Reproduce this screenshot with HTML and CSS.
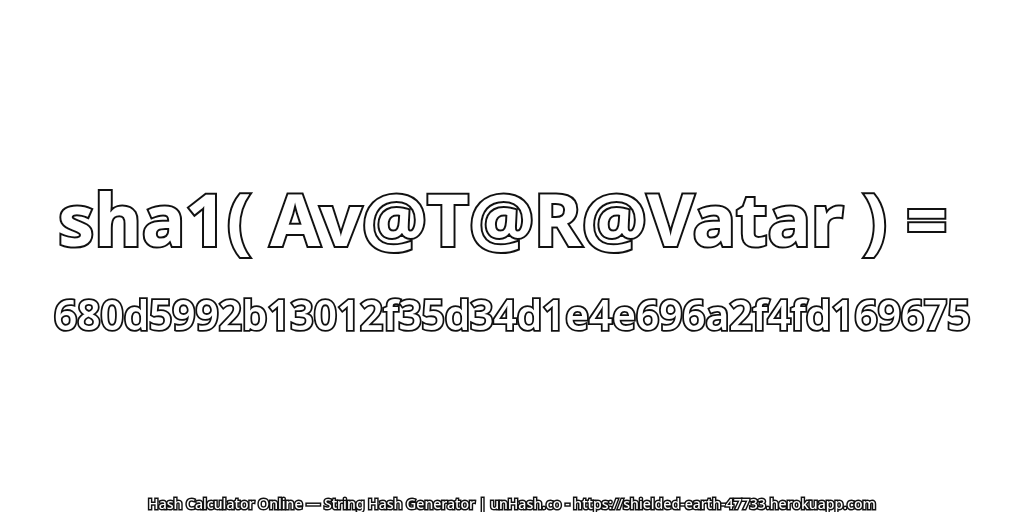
FILE: index.html
```html
<!doctype html>
<html lang="en">
<head>
	<meta charset="UTF-8">
	<title>unHash</title>
	<link rel="stylesheet" href="styles.css">
</head>
<body>
	<main class="card">
		<h1 class="title">sha1( Av@T@R@Vatar ) =</h1>
		<p class="hash">680d5992b13012f35d34d1e4e696a2f4fd169675</p>
	</main>
	<footer class="credit">Hash Calculator Online — String Hash Generator | unHash.co - https://shielded-earth-47733.herokuapp.com</footer>
</body>
</html>
```

FILE: styles.css
```css
html, body {
	margin: 0;
	height: 512px;
	overflow: hidden;
}
body {
	display: flex;
	flex-direction: column;
	background: #fff;
	font-family: "Noto Sans", sans-serif;
	color: #fff;
}
.card {
	flex: 1;
	display: flex;
	flex-direction: column;
	align-items: center;
	padding-top: 178px;
}
.title, .hash, .credit {
	margin: 0;
	white-space: nowrap;
	paint-order: stroke fill;
	will-change: transform;
}
.title {
	font-size: 72.6px;
	font-weight: 700;
	line-height: 80px;
	padding-right: 18px;
	-webkit-text-stroke: 4px #111;
}
.hash {
	font-size: 40.6px;
	font-weight: 600;
	line-height: 50px;
	margin-top: 32px;
	-webkit-text-stroke: 3.6px #111;
}
.credit {
	text-align: center;
	font-size: 14.1px;
	font-weight: 500;
	line-height: 16px;
	-webkit-text-stroke: 3px #111;
}
```
